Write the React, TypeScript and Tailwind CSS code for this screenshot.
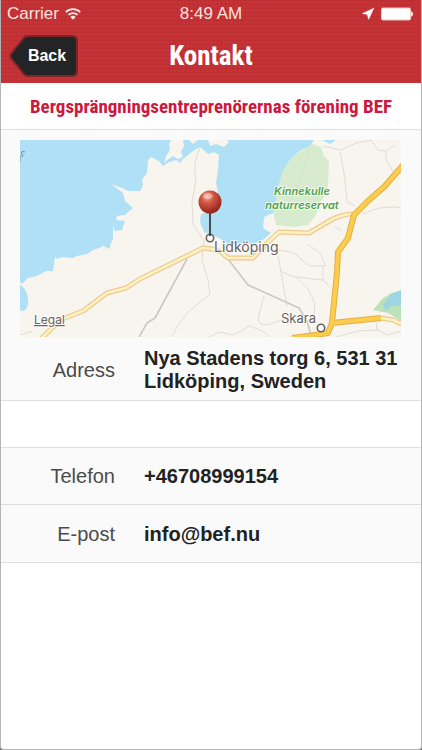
import { Navigation } from "lucide-react";
import type { ReactNode } from "react";

function WifiIcon() {
  return (
    <svg viewBox="0 0 16 12" className="h-3 w-4" aria-hidden="true" fill="none" stroke="#fbe9e4" strokeWidth="1.8">
      <path d="M0.8 4.2C4.8 0.2 11.2 0.2 15.2 4.2" />
      <path d="M3.4 6.9C6 4.4 10 4.4 12.6 6.9" />
      <path d="M5.3 8.9C6.8 7.4 9.2 7.4 10.7 8.9L8 11.8Z" fill="#fbe9e4" stroke="none" />
    </svg>
  );
}

function BatteryIcon() {
  return (
    <svg viewBox="0 0 34 14" className="h-[14px] w-[34px]" aria-hidden="true">
      <rect x="0" y="0.5" width="30" height="13" rx="2" fill="#f0c4bf" />
      <rect x="1" y="1.5" width="28" height="11" rx="1" fill="#fff" />
      <path d="M30 4Q34.5 7 30 10Z" fill="#f8e4e1" />
    </svg>
  );
}

function StatusBar() {
  return (
    <div className="grid h-7 grid-cols-3 items-center px-1.5 text-[17px] leading-7 text-[#fbe4df]">
      <div className="flex items-center gap-1.5">
        <span>Carrier</span>
        <WifiIcon />
      </div>
      <div className="text-center whitespace-nowrap">8:49 AM</div>
      <div className="flex items-center justify-end gap-1.5">
        <Navigation className="h-[14px] w-[14px]" fill="#fff" stroke="#fff" strokeWidth={1} aria-hidden="true" />
        <BatteryIcon />
      </div>
    </div>
  );
}

function BackButton() {
  return (
    <button type="button" className="relative h-11 w-[70px] pl-1.5 text-[16px] font-bold text-white">
      <svg viewBox="0 0 70 44" className="absolute inset-0 h-full w-full" aria-hidden="true">
        <path
          d="M19 2H63Q68 2 68 7V37Q68 42 63 42H19Q16 42 14 39L2 24Q1 22 2 20L14 5Q16 2 19 2Z"
          fill="#232426"
          stroke="#7c2426"
          strokeWidth="2"
        />
      </svg>
      <span className="relative">Back</span>
    </button>
  );
}

function Header() {
  return (
    <header className="bg-[#c63337] bg-[linear-gradient(rgba(90,10,20,0.07)_1px,transparent_1px),linear-gradient(90deg,rgba(90,10,20,0.07)_1px,transparent_1px)] bg-[length:4px_4px]">
      <StatusBar />
      <div className="grid h-[55px] grid-cols-[1fr_auto_1fr] items-center px-2">
        <BackButton />
        <h1 className="font-['Roboto_Condensed',Roboto,sans-serif] text-[27px] leading-8 font-bold text-white">
          Kontakt
        </h1>
      </div>
    </header>
  );
}

const paleRoads = [
  "M20 200L40 180L63 171L87 153L106 148L120 139L183 108L192 109L201 112L208 118H233L247 103L259 92L289 93L311 80Q322 74 333 74",
  "M361 178L373 180L384 185",
];
const mainRoads = [
  "M384 24L364 47L349 60L334 75L328 98L318 112L317 132L312 183L308 193L295 195L272 198",
  "M312 183L361 178",
];
const smallRoads = [
  "M180 8Q172 24 176 40L172 62L173 84L184 101L183 108",
  "M183 108L182 120L188 140L190 154L168 172L158 185L151 199",
  "M289 8L283 32L274 54",
  "M303 6L320 10L336 3L352 0",
  "M320 12Q326 38 327 62L335 66",
  "M343 74Q362 64 384 68",
  "M351 0L358 10L366 11L375 5M366 11V20L374 33",
  "M315 87L322 91",
  "M249 111Q274 108 282 120L290 126H306L300 113L287 104",
  "M258 115L267 166M260 131L275 137L303 140L303 125M303 140L310 147",
  "M276 137L288 149L295 163L294 180",
  "M244 156L239 175Q235 191 259 181L270 177",
  "M0 195L13 191M185 199L200 192L213 195L230 186L244 192L252 199",
  "M316 197L338 191L357 190L356 181M357 190L368 195L381 191",
];

function LidkopingMap() {
  return (
    <svg
      viewBox="0 0 381 197"
      className="block h-auto w-full font-[Inter,'Liberation_Sans',sans-serif]"
      role="img"
      aria-label="Lidköping"
    >
      <defs>
        <radialGradient id="pin" cx="38%" cy="28%" r="70%">
          <stop offset="0" stopColor="#f3b3a2" />
          <stop offset="0.35" stopColor="#d65b48" />
          <stop offset="1" stopColor="#96251b" />
        </radialGradient>
      </defs>
      <rect width="381" height="197" fill="#f8f4ee" />
      <path
        fill="#b0e0f5"
        d="M0 0H294L290 6L281 10L270 20L264 30L260 46L257 62L253 73L244 77L243 88L251 93L244 99L234 104H208L199 98L190 94L184 92L180 82L181 74L188 72L194 60L198 53L196 43L198 30L199 15L194 12L188 14L180 7L173 11L167 16L163 19L160 23L156 20L149 22L143 26L139 21L131 17L128 20L127 33L122 40L123 45L120 51L108 51L102 48L91 44L103 53L105 61L113 68L108 72L105 75L97 76L96 80L105 81L102 90L95 91L93 86L93 99L90 105L90 109L83 106L79 108L73 110L67 114L57 116L53 118L42 117L37 119L35 117L33 131L26 131L17 136L8 138L2 144L0 142Z"
      />
      <path fill="#b0e0f5" d="M0 145C5 147 6 151 8 158C9 164 7 171 2 171L0 170Z" />
      <path fill="#f8f4ee" d="M151 0H163L164 6L161 12L163 17L158 19L153 16L146 21L144 24L146 16L150 10L149 4Z" />
      <path fill="#f8f4ee" d="M169 0L173 4L178 0ZM188 0L190 6L196 4L204 7L209 2L207 0Z" />
      <path fill="#b0e0f5" d="M302 0L310 4L316 0Z" />
      <path
        fill="#d7ecce"
        d="M263 30L272 18L281 11L292 4L301 7L304 16L309 21L308 45L305 55L298 66L296 75L288 85L274 87L256 85L253 72L258 47Z"
      />
      <path fill="#bce2b9" d="M353 170L363 158L372 153L381 151V181L368 173Z" />
      <path fill="#9dd6e2" d="M363 165L371 154L381 150V165L371 166L366 171Z" />

      <g fill="none" strokeLinejoin="round">
        {smallRoads.map((d) => (
          <path key={d} d={d} stroke="#e1dbd8" strokeWidth="1" />
        ))}
        <path
          d="M208 119L228 145L279 168L287 181L291 195M167 119L135 178L127 183L118 199"
          stroke="#cbc8c4"
          strokeWidth="1.6"
        />
        {paleRoads.map((d) => (
          <path key={d} d={d} stroke="#ecca92" strokeWidth="5" />
        ))}
        {paleRoads.map((d) => (
          <path key={d} d={d} stroke="#fff2c0" strokeWidth="2.6" />
        ))}
        {mainRoads.map((d) => (
          <path key={d} d={d} stroke="#e3ae45" strokeWidth="6" />
        ))}
        {mainRoads.map((d) => (
          <path key={d} d={d} stroke="#fbcd4d" strokeWidth="4" />
        ))}
      </g>

      <path d="M0 22Q-1 15 3 16Q-1 10 5 12" fill="none" stroke="#608fa3" strokeWidth="1" />

      <g stroke="#fff" strokeWidth="2" strokeOpacity="0.7" paintOrder="stroke">
        <g fill="#50a447" fontSize="11" fontWeight="600" fontStyle="italic" textAnchor="middle">
          <text x="282" y="55">Kinnekulle</text>
          <text x="282" y="69">naturreservat</text>
        </g>
        <g fill="#66625f" fontSize="14">
          <text x="194" y="112">Lidköping</text>
          <text x="261" y="183" fontSize="13">Skara</text>
          <text x="14" y="184" fontSize="12" textDecoration="underline">Legal</text>
        </g>
      </g>
      <g fill="#fff" stroke="#66625f" strokeWidth="1.6">
        <circle cx="301" cy="188" r="3.7" />
        <circle cx="190" cy="98" r="3.7" />
      </g>
      <path d="M190 72V96" stroke="#4c4c4c" strokeWidth="2" />
      <circle cx="190" cy="62" r="11.5" fill="url(#pin)" />
      <ellipse cx="188" cy="56" rx="5" ry="3" fill="#fff" fillOpacity="0.35" />
    </svg>
  );
}

function DetailRow({ label, children }: { label: string; children: ReactNode }) {
  return (
    <div className="grid grid-cols-[114px_1fr] items-center gap-x-[29px]">
      <dt className="text-right text-xl leading-6 text-[#4b4b4b]">{label}</dt>
      <dd className="text-[20px] leading-[23px] font-bold text-[#222]">{children}</dd>
    </div>
  );
}

export default function App() {
  return (
    <div className="min-h-screen bg-[#777] font-['Liberation_Sans',Arial,sans-serif]">
      <div className="min-h-screen rounded-b border-x border-b border-[#b5b5b5] bg-white">
        <Header />
        <main>
          <h2 className="border-b border-[#e1e1e5] px-2 pt-3 pb-[10px] text-center font-['Roboto_Condensed',Roboto,sans-serif] text-[19px] leading-6 font-bold text-[#cf173e]">
            Bergsprängningsentreprenörernas förening BEF
          </h2>
          <section className="border-b border-[#dedede] bg-[#fafafa] pt-[10px] pb-[7px]">
            <div className="pr-5 pl-[19px]">
              <LidkopingMap />
            </div>
            <dl className="pt-[10px]">
              <DetailRow label="Adress">
                Nya Stadens torg 6, 531 31
                <br />
                Lidköping, Sweden
              </DetailRow>
            </dl>
          </section>
          <dl className="mt-[46px] bg-[#fafafa]">
            <div className="border-y border-[#dedede] py-4">
              <DetailRow label="Telefon">
                <a href="tel:+46708999154">+46708999154</a>
              </DetailRow>
            </div>
            <div className="border-b border-[#dedede] pt-[17px] pb-4">
              <DetailRow label="E-post">
                <a href="mailto:info@bef.nu">info@bef.nu</a>
              </DetailRow>
            </div>
          </dl>
        </main>
      </div>
    </div>
  );
}
